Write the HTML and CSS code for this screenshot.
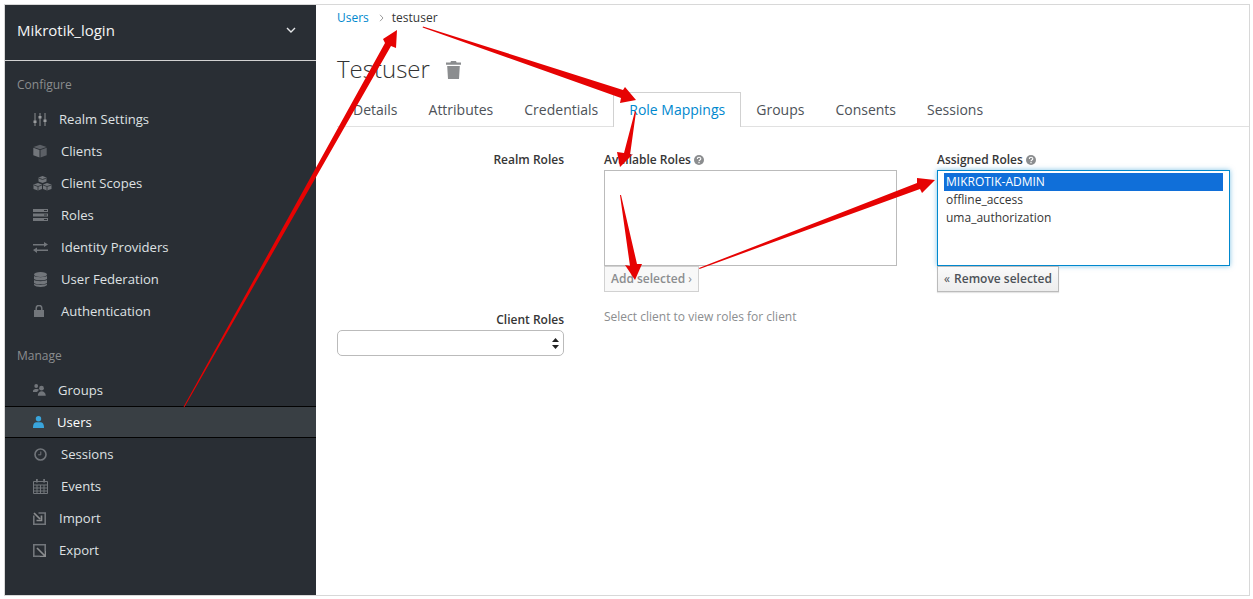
FILE: index.html
```html
<!DOCTYPE html>
<html lang="en">
<head>
<meta charset="utf-8">
<title>Testuser</title>
<link rel="stylesheet" href="styles.css">
</head>
<body>
<div class="frame">
  <aside class="sidebar">
    <div class="realm">
      <span>Mikrotik_login</span>
      <svg class="chev" width="10" height="6" viewBox="0 0 10 6"><path d="M1 1l4 4 4-4" fill="none" stroke="#e4e6e8" stroke-width="1.4"/></svg>
    </div>
    <div class="group-title first">Configure</div>
    <nav class="nav">
      <a class="item w26"><svg width="14" height="13" viewBox="0 0 14 13"><path d="M2 0v13M7 0v13M12 0v13" stroke="#8b8d8f" stroke-width="1"/><path d="M0.5 7.500h3v2.500h-3zM5.500 3h3v2.500h-3zM10.500 6.500h3v2.500h-3z" fill="#9a9c9e"/></svg><span>Realm Settings</span></a>
      <a class="item w28"><svg width="14" height="14" viewBox="0 0 14 14"><path d="M7 .8l6.500 2.200L7 5.300.5 3z" fill="#5c6066"/><path d="M.3 3.800l6.200 2.200v7.600L.3 11.200z" fill="#72767b"/><path d="M13.700 3.800L7.500 6v7.600l6.200-2.400z" fill="#5c6066"/></svg><span>Clients</span></a>
      <a class="item w28"><svg width="19" height="15" viewBox="0 0 19 15"><path d="M9.500 0l4 1.500v4l-4 1.600-4-1.600v-4z" fill="#72767b"/><path d="M5 7l4 1.600v4.400l-4 1.600-4.500-1.600V8.600z" fill="#72767b"/><path d="M14 7l4.500 1.600v4.400L14 14.600 10 13V8.600z" fill="#72767b"/><path d="M1 9l4 1.500 4-1.500M10 9l4 1.500 4.500-1.500M5.500 2l4 1.500 4-1.500M5 10.500V14.500M14 10.500V14.500" fill="none" stroke="#292e34" stroke-width=".8"/></svg><span>Client Scopes</span></a>
      <a class="item w28"><svg width="15" height="12" viewBox="0 0 15 12"><path d="M0 0h15v3H0zM0 4.500h15v3H0zM0 9h15v3H0z" fill="#72767b"/><path d="M11 1h3v1h-3zM11 5.500h3v1h-3zM11 10h3v1h-3z" fill="#292e34"/></svg><span>Roles</span></a>
      <a class="item w28"><svg width="15" height="11" viewBox="0 0 15 11"><path d="M0 2h11V0l4 2.500-4 2.500V3.500H0zM15 7.500H4V5.500L0 8l4 3V9h11z" fill="#72767b"/></svg><span>Identity Providers</span></a>
      <a class="item w28"><svg class="nudge" width="13" height="15" viewBox="0 0 13 15"><ellipse cx="6.500" cy="2.500" rx="6.500" ry="2.500" fill="#72767b"/><path d="M0 4c1.500 1.500 11.500 1.500 13 0v3c-1.500 1.800-11.500 1.800-13 0zM0 8c1.500 1.500 11.500 1.500 13 0v3c-1.500 1.800-11.500 1.800-13 0zM0 11.800c1.500 1.500 11.500 1.500 13 0V13c-1.500 2.600-11.500 2.600-13 0z" fill="#72767b"/></svg><span>User Federation</span></a>
      <a class="item w28"><svg class="nudge" width="10" height="12" viewBox="0 0 10 12"><path d="M2.200 5V3.200a2.800 2.800 0 015.600 0V5" fill="none" stroke="#72767b" stroke-width="1.500"/><path d="M0 5h10v7H0z" fill="#72767b"/></svg><span>Authentication</span></a>
    </nav>
    <div class="group-title">Manage</div>
    <nav class="nav">
      <a class="item w25"><svg width="13" height="12" viewBox="0 0 13 12"><circle cx="3.200" cy="2" r="1.900" fill="#72767b"/><path d="M0 6.800C0 4.500 6 4.500 5.800 6L4 8H0z" fill="#72767b"/><circle cx="8.500" cy="4.200" r="2.400" fill="#72767b"/><path d="M4.800 11.800c0-6 7.800-6 8 0z" fill="#72767b"/></svg><span>Groups</span></a>
      <a class="item active w24"><svg width="11" height="12" viewBox="0 0 11 12"><circle cx="5.500" cy="2.700" r="2.700" fill="#39a5dc"/><path d="M0 12c0-2 .3-5.500 3.200-5.700h4.600C10.700 6.500 11 10 11 12z" fill="#39a5dc"/></svg><span>Users</span></a>
      <a class="item w28"><svg class="nudge" width="13" height="13" viewBox="0 0 13 13"><circle cx="6.500" cy="6.500" r="5.500" fill="none" stroke="#72767b" stroke-width="1.600"/><path d="M6.800 3.500v3.300H4.200" fill="none" stroke="#72767b" stroke-width="1"/></svg><span>Sessions</span></a>
      <a class="item w28"><svg width="15" height="15" viewBox="0 0 15 15"><path d="M.5 2.500h14v12H.5zM.5 6h14M.5 9h14M.5 12h14M4 6v8M7.500 6v8M11 6v8" fill="none" stroke="#72767b" stroke-width="1"/><path d="M3 0h1.800v3.500H3zM10.200 0H12v3.500h-1.800z" fill="#72767b"/></svg><span>Events</span></a>
      <a class="item w26"><svg width="13" height="13" viewBox="0 0 13 13"><path d="M.8 3.500v8.700h11.400V1H5.500" fill="none" stroke="#72767b" stroke-width="1.600"/><path d="M1 1l6 6M8.500 3.500V8.500H3.500" fill="none" stroke="#8b8d8f" stroke-width="1.700"/></svg><span>Import</span></a>
      <a class="item w26"><svg width="13" height="13" viewBox="0 0 13 13"><path d="M7 12.200H.8V.8h11.400V7" fill="none" stroke="#72767b" stroke-width="1.600"/><path d="M4 4l8 8M12.500 7v5.500H7" fill="none" stroke="#8b8d8f" stroke-width="1.700"/></svg><span>Export</span></a>
    </nav>
  </aside>

  <main class="main">
    <div class="crumbs"><a class="link">Users</a><svg class="crumb-sep" width="5" height="8" viewBox="0 0 5 8"><path d="M1 .8L4 4 1 7.200" fill="none" stroke="#9c9c9c" stroke-width="1"/></svg><span>testuser</span></div>
    <h1 class="title"><span>Testuser</span><svg class="trash" width="15" height="18" viewBox="0 0 15 18"><path d="M5 0h5l.6 1.600H15v2.200H0V1.600h4.400z" fill="#8b8d8f"/><path d="M1.200 5h12.600l-.8 13H2z" fill="#8b8d8f"/></svg></h1>
    <ul class="tabs">
      <li class="tab">Details</li>
      <li class="tab">Attributes</li>
      <li class="tab">Credentials</li>
      <li class="tab on">Role Mappings</li>
      <li class="tab">Groups</li>
      <li class="tab">Consents</li>
      <li class="tab">Sessions</li>
    </ul>
    <section class="form">
      <div class="row-label">Realm Roles</div>
      <div class="col">
        <div class="col-label">Available Roles <svg class="help" width="10" height="10" viewBox="0 0 10 10"><circle cx="5" cy="5" r="5" fill="#8b8d8f"/><path d="M3.300 3.900c0-2.200 3.500-2.200 3.500-.2 0 1.300-1.800 1.200-1.800 2.500" fill="none" stroke="#fff" stroke-width="1.100"/><path d="M4.400 7h1.200v1.200H4.400z" fill="#fff"/></svg></div>
        <div class="listbox"></div>
        <div class="btn disabled">Add selected <span class="sym">›</span></div>
      </div>
      <div class="col">
        <div class="col-label">Assigned Roles <svg class="help" width="10" height="10" viewBox="0 0 10 10"><circle cx="5" cy="5" r="5" fill="#8b8d8f"/><path d="M3.300 3.900c0-2.200 3.500-2.200 3.500-.2 0 1.300-1.800 1.200-1.800 2.500" fill="none" stroke="#fff" stroke-width="1.100"/><path d="M4.400 7h1.200v1.200H4.400z" fill="#fff"/></svg></div>
        <div class="listbox focus">
          <div class="opt sel">MIKROTIK-ADMIN</div>
          <div class="opt">offline_access</div>
          <div class="opt">uma_authorization</div>
        </div>
        <div class="btn"><span class="sym gap">«</span> Remove selected</div>
      </div>
      <div class="client-col">
        <div class="row-label">Client Roles</div>
        <div class="select"><svg width="7" height="11" viewBox="0 0 7 11"><path d="M3.500 0L7 4H0zM0 7h7l-3.500 4z" fill="#222"/></svg></div>
      </div>
      <div class="hint">Select client to view roles for client</div>
    </section>
  </main>

  <svg class="arrows" width="1253" height="599" viewBox="0 0 1253 599">
    <g fill="#e60303">
      <path d="M183.600 406.800L385 43 383 39 397 30 396 48 391 46 184.400 407.200z"/>
      <path d="M423 26.500L623 90 625 87 636 100 620 103 621 98 422.600 27.500z"/>
      <path d="M635 111L636 112 630 155 633 154 620 167 617 152 624 153z"/>
      <path d="M620 195L630 266 625 265 635 280 642 264 637 264 621 195z"/>
      <path d="M699 268L917 183 917 178 935 180 922 193 920 189 699.500 269z"/>
    </g>
  </svg>
</div>
</body>
</html>
```
FILE: styles.css
```css
* { box-sizing: border-box; }
html, body { margin: 0; padding: 0; background: #fff; }
body {
  font-family: "Open Sans", "Liberation Sans", sans-serif;
  font-size: 13px;
  color: #363636;
  overflow: hidden;
}
.frame {
  position: relative;
  display: flex;
  width: 1246px;
  height: 592px;
  margin: 4px 0 0 4px;
  border: 1px solid #d8d8d8;
}
.sidebar {
  width: 311px;
  flex: none;
  background: #292e34;
  color: #dfe1e3;
}
.realm {
  display: flex;
  align-items: center;
  justify-content: space-between;
  height: 56px;
  padding: 0 20px 5px 12px;
  font-size: 15px;
  color: #f5f5f5;
  border-bottom: 1px solid #d1d1d1;
}
.group-title {
  padding-left: 12px;
  margin-top: 13px;
  height: 34px;
  line-height: 32px;
  color: #8b8d8f;
  font-size: 12px;
}
.group-title.first { margin-top: 8px; }
.nav { display: flex; flex-direction: column; }
.item {
  display: grid;
  align-items: center;
  height: 32px;
  padding-left: 28px;
  font-size: 13.1px;
  color: #dfe1e3;
  border-top: 1px solid transparent;
  border-bottom: 1px solid transparent;
}
.w28 { grid-template-columns: 28px 1fr; }
.w26 { grid-template-columns: 26px 1fr; }
.w25 { grid-template-columns: 25px 1fr; }
.w24 { grid-template-columns: 24px 1fr; }
.nudge { margin-left: 1px; }
.item.active {
  background: #393f44;
  color: #fff;
  border-top-color: #030303;
  border-bottom-color: #030303;
}
.main { flex: 1; min-width: 0; padding: 0 0 0 21px; }
.crumbs {
  display: flex;
  align-items: center;
  height: 26px;
  padding-bottom: 1px;
  font-size: 12px;
}
.link { color: #0088ce; }
.crumb-sep { margin: 0 8px 0 10px; }
.title {
  display: flex;
  align-items: center;
  gap: 16px;
  height: 61px;
  margin: 0;
  padding-top: 14px;
  font-size: 24px;
  font-weight: 300;
  color: #333;
}
.trash { margin-top: 2px; }
.tabs {
  display: flex;
  height: 35px;
  margin: 0;
  padding: 0;
  list-style: none;
  border-bottom: 1px solid #e1e1e1;
  font-size: 14px;
  color: #4d5258;
}
.tab {
  padding: 7px 15px 0;
  margin-right: -1px;
  height: 35px;
  border: 1px solid transparent;
  border-bottom: 0;
}
.tab.on {
  color: #0088ce;
  background: #fff;
  border-color: #d1d1d1;
}
.form {
  display: grid;
  grid-template-columns: 227px 293px 293px;
  column-gap: 40px;
  padding-top: 24px;
  font-size: 12px;
}
.row-label {
  text-align: right;
  font-weight: 600;
  line-height: 18px;
}
.col-label {
  height: 19px;
  line-height: 18px;
  font-weight: 600;
}
.help { vertical-align: -1px; }
.listbox {
  height: 96px;
  border: 1px solid #bbb;
  background: #fff;
  padding: 2px 6px;
}
.listbox.focus {
  border-color: #0088ce;
  box-shadow: 0 0 5px rgba(0, 136, 206, .5);
}
.opt { height: 18px; line-height: 18px; padding-left: 2px; }
.opt.sel { background: #106fd9; color: #fff; }
.btn {
  display: inline-block;
  height: 26px;
  line-height: 24px;
  padding: 0 6px;
  font-weight: 600;
  color: #4d5258;
  background: linear-gradient(#fafafa, #ededed);
  border: 1px solid #bbb;
  box-shadow: 0 1px 1px rgba(0,0,0,.1);
}
.btn.disabled {
  color: #8b8d8f;
  background: #f8f8f8;
  box-shadow: none;
  border-color: #d1d1d1;
}
.sym { font-weight: 400; }
.sym.gap { margin-right: 1px; }
.client-col { grid-column: 1; grid-row: 2; margin-top: 19px; }
.select {
  display: flex;
  align-items: center;
  justify-content: flex-end;
  height: 26px;
  margin-top: 1px;
  padding-right: 4px;
  border: 1px solid #bbb;
  border-radius: 5px;
  background: #fff;
}
.hint {
  grid-column: 2 / 4;
  grid-row: 2;
  margin-top: 16px;
  line-height: 18px;
  color: #8b8d8f;
}
.arrows {
  position: absolute;
  left: -5px;
  top: -5px;
  pointer-events: none;
}
```
